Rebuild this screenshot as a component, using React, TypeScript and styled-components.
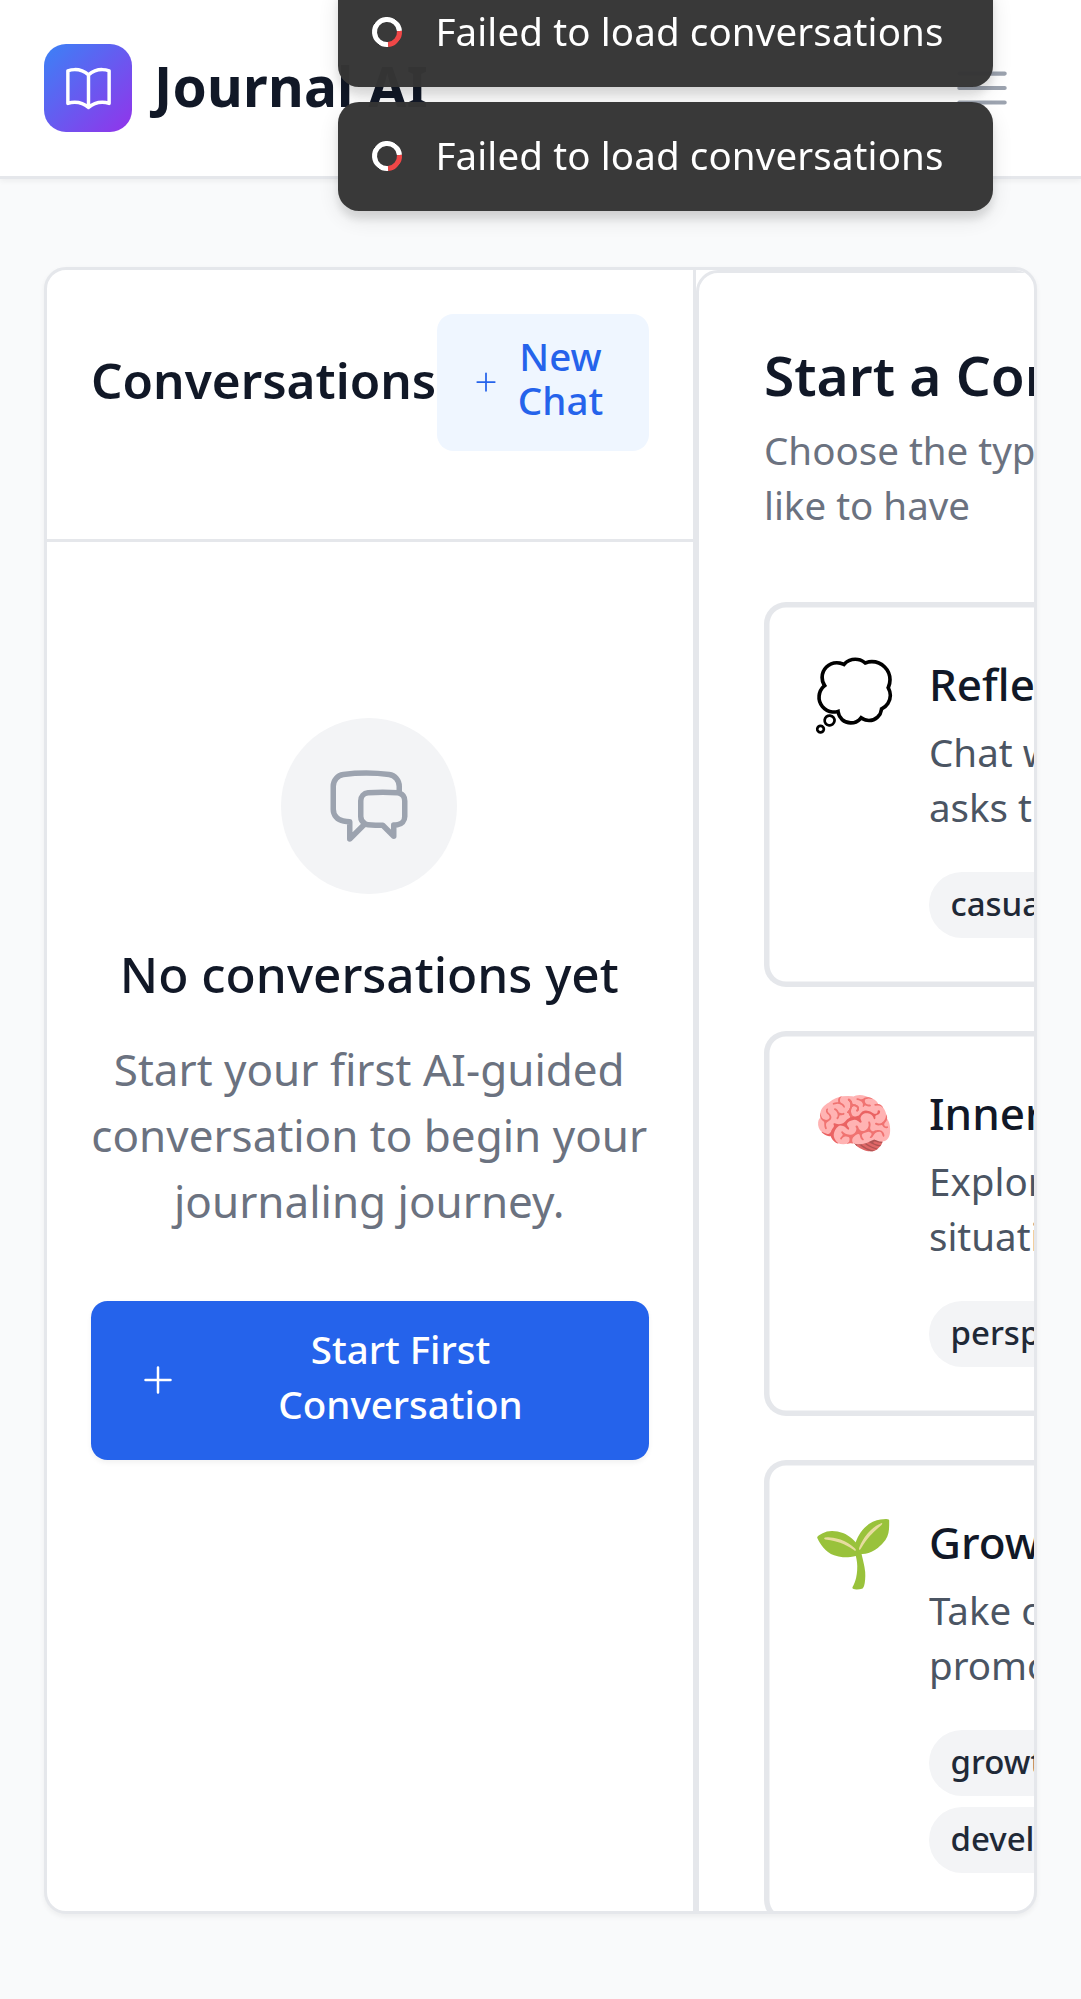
import React from "react";
import styled, { createGlobalStyle } from "styled-components";
import {
  HiOutlineBars3,
  HiOutlineBookOpen,
  HiOutlineChatBubbleLeftRight,
  HiOutlinePlus,
} from "react-icons/hi2";

const GlobalStyle = createGlobalStyle`
  *, *::before, *::after { box-sizing: border-box; }
  body {
    margin: 0;
    background: #f9fafb;
    color: #111827;
    font-family: "Noto Sans", sans-serif;
    overflow: hidden;
  }
  h1, h2, h3, h4, p { margin: 0; }
  button { font-family: inherit; border: 0; cursor: pointer; }
  svg { display: block; flex-shrink: 0; }
`;

const Page = styled.div`
  height: 1999px;
  display: flex;
  flex-direction: column;
  overflow: hidden;
`;

const Header = styled.header`
  height: 179px;
  flex-shrink: 0;
  display: flex;
  align-items: center;
  justify-content: space-between;
  padding: 0 44px;
  background: #fff;
  border-bottom: 3px solid #e5e7eb;
  box-shadow: 0 2.75px 5.5px rgba(0, 0, 0, 0.05);
`;

const Brand = styled.div`
  display: flex;
  align-items: center;
  gap: 22px;
`;

const Logo = styled.div`
  width: 88px;
  height: 88px;
  border-radius: 22px;
  display: grid;
  place-items: center;
  color: #fff;
  font-size: 55px;
  background: linear-gradient(to bottom right, #3b82f6, #9333ea);
`;

const BrandName = styled.h1`
  padding-bottom: 5px;
  font-size: 55px;
  line-height: 77px;
  font-weight: 700;
  letter-spacing: 0.25px;
`;

const MenuButton = styled.button`
  padding: 22px;
  background: transparent;
  color: #9ca3af;
  font-size: 66px;
`;

const Main = styled.main`
  flex: 1;
  padding: 88px 44px 85px;
  display: flex;
  min-height: 0;
`;

const Shell = styled.div`
  flex: 1;
  min-width: 0;
  display: flex;
  background: #fff;
  border: 3px solid #e5e7eb;
  border-radius: 22px;
  overflow: hidden;
  box-shadow: 0 2.75px 5.5px rgba(0, 0, 0, 0.05);
`;

const Sidebar = styled.aside`
  width: 649px;
  flex-shrink: 0;
  display: flex;
  flex-direction: column;
  border-right: 3px solid #e5e7eb;
`;

const SidebarHeader = styled.div`
  padding: 44px 44px 88px;
  display: flex;
  align-items: center;
  justify-content: space-between;
  border-bottom: 3px solid #e5e7eb;
`;

const SidebarTitle = styled.h2`
  padding-bottom: 4px;
  font-size: 49.5px;
  line-height: 77px;
  font-weight: 600;
`;

const NewChatButton = styled.button`
  width: 212px;
  height: 137px;
  flex-shrink: 0;
  display: flex;
  align-items: center;
  padding: 0 33px;
  border-radius: 16.5px;
  background: #eff6ff;
  color: #2563eb;
  font-size: 38.5px;
  line-height: 44px;
  font-weight: 500;

  svg { width: 28px; height: 28px; margin: 0 5.5px 1px 1.5px; }
  span { flex: 1; padding-bottom: 9px; }
`;

const EmptyState = styled.section`
  display: flex;
  flex-direction: column;
  align-items: center;
  padding: 176px 45.5px 0 44px;
  text-align: center;
`;

const EmptyIcon = styled.div`
  width: 176px;
  height: 176px;
  border-radius: 50%;
  display: grid;
  place-items: center;
  background: #f3f4f6;
  color: #9ca3af;
  font-size: 88px;
`;

const EmptyTitle = styled.h3`
  margin-top: 42px;
  font-size: 49.5px;
  line-height: 77px;
  font-weight: 500;
`;

const EmptyText = styled.p`
  margin-top: 23px;
  font-size: 44px;
  line-height: 66px;
  color: #6b7280;
  white-space: nowrap;
`;

const StartButton = styled.button`
  align-self: flex-start;
  margin-top: 67px;
  width: 558px;
  height: 159px;
  display: flex;
  align-items: center;
  padding: 0 47px;
  border-radius: 16.5px;
  background: #2563eb;
  color: #fff;
  font-size: 38.5px;
  line-height: 55px;
  font-weight: 500;
  box-shadow: 0 2.75px 5.5px rgba(0, 0, 0, 0.05);

  svg { width: 40px; height: 40px; margin: 0 21px 1px 0; }
  span { flex: 1; padding-bottom: 7px; }
`;

const Picker = styled.section`
  width: 1100px;
  height: 1780px;
  flex-shrink: 0;
  padding: 63px 66px 66px 65px;
  border: 3px solid #e5e7eb;
  border-radius: 22px;
`;

const PickerTitle = styled.h2`
  font-size: 55px;
  line-height: 77px;
  font-weight: 600;
`;

const PickerText = styled.p`
  margin-top: 10px;
  width: 640px;
  font-size: 38.5px;
  line-height: 55px;
  color: #6b7280;
`;

const Options = styled.div`
  margin-top: 69px;
  display: flex;
  flex-direction: column;
  gap: 44px;
`;

const Option = styled.article`
  display: flex;
  align-items: flex-start;
  gap: 34.5px;
  padding: 48.5px 49.5px 49.5px 48.5px;
  border-radius: 22px;
  box-shadow: inset 0 0 0 5.5px #e5e7eb;
`;

const Emoji = styled.div`
  width: 82px;
  flex-shrink: 0;
  font-size: 66px;
  line-height: 82px;
`;

const OptionTitle = styled.h4`
  font-size: 44px;
  line-height: 66px;
  font-weight: 500;
`;

const OptionText = styled.p`
  margin-top: 8px;
  width: 640px;
  font-size: 38.5px;
  line-height: 55px;
  color: #4b5563;
`;

const Tags = styled.div`
  margin-top: 37px;
  width: 460px;
  display: flex;
  flex-wrap: wrap;
  gap: 11px;
`;

const Tag = styled.span`
  padding: 10px 22px 12px 21.5px;
  border-radius: 33px;
  background: #f3f4f6;
  color: #1f2937;
  font-size: 33px;
  line-height: 44px;
  font-weight: 500;
`;

const Toasts = styled.div`
  position: fixed;
  z-index: 10;
  top: -22px;
  right: 88px;
  display: flex;
  flex-direction: column;
  gap: 15px;
`;

const Toast = styled.div`
  width: 655px;
  height: 109px;
  display: flex;
  align-items: center;
  padding: 0 0 3px 34px;
  border-radius: 21px;
  background: #363636;
  color: #fff;
  font-size: 38.5px;
  line-height: 50px;
  letter-spacing: 0.12px;
  white-space: nowrap;
  opacity: 0.98;
  box-shadow: 0 8px 26px rgba(0, 0, 0, 0.1), 0 8px 8px rgba(0, 0, 0, 0.1);
`;

const Spinner = styled.i`
  width: 30px;
  height: 30px;
  margin: 1px 33.5px 0 0;
  border-radius: 50%;
  border: 5px solid #fff;
  border-right-color: #ef4444;
  transform: rotate(40deg);
`;

const options = [
  {
    emoji: "💭",
    title: "Reflective Chat",
    text: ["Chat with a supportive AI that", "asks thoughtful questions"],
    tags: ["casual"],
  },
  {
    emoji: "🧠",
    title: "Inner Voices",
    text: ["Explore different sides of your", "situation with many voices"],
    tags: ["perspectives"],
  },
  {
    emoji: "🌱",
    title: "Growth Challenge",
    text: ["Take on gentle challenges that", "promote personal growth"],
    tags: ["growth mindset", "development goals"],
  },
];

const toasts = ["Failed to load conversations", "Failed to load conversations"];

export default function App() {
  return (
    <Page>
      <GlobalStyle />
      <Header>
        <Brand>
          <Logo><HiOutlineBookOpen /></Logo>
          <BrandName>Journal AI</BrandName>
        </Brand>
        <MenuButton aria-label="Menu"><HiOutlineBars3 /></MenuButton>
      </Header>
      <Main>
        <Shell>
          <Sidebar>
            <SidebarHeader>
              <SidebarTitle>Conversations</SidebarTitle>
              <NewChatButton><HiOutlinePlus /><span>New<br />Chat</span></NewChatButton>
            </SidebarHeader>
            <EmptyState>
              <EmptyIcon><HiOutlineChatBubbleLeftRight /></EmptyIcon>
              <EmptyTitle>No conversations yet</EmptyTitle>
              <EmptyText>
                Start your first AI-guided<br />conversation to begin your<br />journaling journey.
              </EmptyText>
              <StartButton><HiOutlinePlus /><span>Start First<br />Conversation</span></StartButton>
            </EmptyState>
          </Sidebar>
          <Picker>
            <PickerTitle>Start a Conversation</PickerTitle>
            <PickerText>Choose the type of chat you’d<br />like to have</PickerText>
            <Options>
              {options.map((o) => (
                <Option key={o.title}>
                  <Emoji>{o.emoji}</Emoji>
                  <div>
                    <OptionTitle>{o.title}</OptionTitle>
                    <OptionText>{o.text[0]}<br />{o.text[1]}</OptionText>
                    <Tags>{o.tags.map((t) => <Tag key={t}>{t}</Tag>)}</Tags>
                  </div>
                </Option>
              ))}
            </Options>
          </Picker>
        </Shell>
      </Main>
      <Toasts>
        {toasts.map((message, i) => (
          <Toast key={i}><Spinner />{message}</Toast>
        ))}
      </Toasts>
    </Page>
  );
}
